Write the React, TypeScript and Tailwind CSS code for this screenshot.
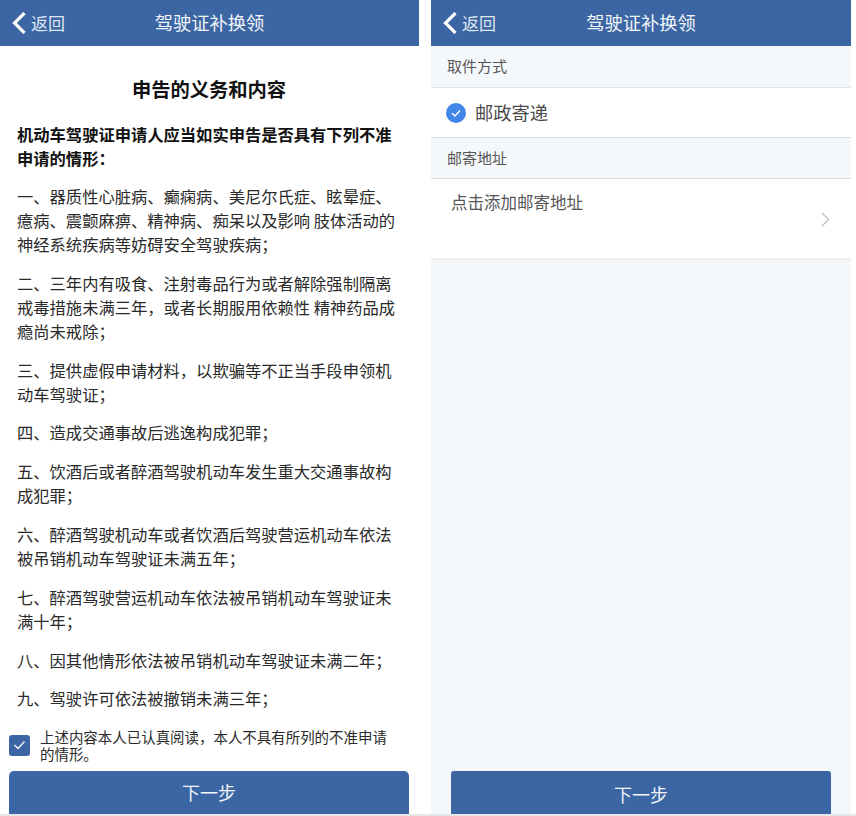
import React from "react";

const paras = [
  "一、器质性心脏病、癫痫病、美尼尔氏症、眩晕症、癔病、震颤麻痹、精神病、痴呆以及影响 肢体活动的神经系统疾病等妨碍安全驾驶疾病；",
  "二、三年内有吸食、注射毒品行为或者解除强制隔离戒毒措施未满三年，或者长期服用依赖性 精神药品成瘾尚未戒除；",
  "三、提供虚假申请材料，以欺骗等不正当手段申领机动车驾驶证；",
  "四、造成交通事故后逃逸构成犯罪；",
  "五、饮酒后或者醉酒驾驶机动车发生重大交通事故构成犯罪；",
  "六、醉酒驾驶机动车或者饮酒后驾驶营运机动车依法被吊销机动车驾驶证未满五年；",
  "七、醉酒驾驶营运机动车依法被吊销机动车驾驶证未满十年；",
  "八、因其他情形依法被吊销机动车驾驶证未满二年；",
  "九、驾驶许可依法被撤销未满三年；",
];

function Header() {
  return (
    <div className="relative flex h-[46px] shrink-0 items-center justify-center bg-[#3b65a3] pb-[1px] text-[18.3px] text-[#f2f5fa]">
      <div className="absolute left-[12px] top-0 flex h-[46px] items-center gap-[5px] pb-[1px] text-[#dfe6f1]">
        <svg width="14" height="22" viewBox="0 0 14 22" fill="none">
          <path d="M12.5 1 L2.5 11 L12.5 21" stroke="#ffffff" strokeWidth="3.2" />
        </svg>
        <span className="text-[17px]">返回</span>
      </div>
      <span>驾驶证补换领</span>
    </div>
  );
}

export default function App() {
  return (
    <div
      className="relative flex h-[816px] w-[856px] overflow-hidden bg-white"
      style={{ fontFamily: '"Noto Sans CJK SC", "Noto Sans", sans-serif' }}
    >
      <div className="flex h-[814px] w-[419px] flex-col bg-white">
        <Header />
        <div className="flex flex-1 flex-col overflow-hidden pl-[17px] pr-[18px] text-[16.3px] leading-[24px] text-[#2a2a2a]">
          <h1 className="mt-[29px] mb-[19px] text-center text-[19.3px] font-bold leading-[28px] text-[#111]">
            申告的义务和内容
          </h1>
          <p className="mb-[14px] font-bold text-[#111]">
            机动车驾驶证申请人应当如实申告是否具有下列不准申请的情形：
          </p>
          {paras.map((p) => (
            <p key={p} className="mb-[14.8px]">
              {p}
            </p>
          ))}
        </div>
        <div className="mb-[9px] flex items-center pl-[9px] pr-[28px]">
          <div className="flex h-[21px] w-[21px] shrink-0 items-center justify-center rounded-[3px] bg-[#3b65a3]">
            <svg width="13" height="10" viewBox="0 0 13 10" fill="none">
              <path d="M1.5 5 L5 8.5 L11.5 1.5" stroke="#fff" strokeWidth="1.3" />
            </svg>
          </div>
          <span className="ml-[10px] text-[14.46px] leading-[17px] text-[#2a2a2a]">
            上述内容本人已认真阅读，本人不具有所列的不准申请的情形。
          </span>
        </div>
        <div className="ml-[9px] mr-[10px] flex h-[43px] shrink-0 items-center justify-center rounded-t-[5px] bg-[#3b65a3] text-[18px] text-[#f2f5fa]">
          下一步
        </div>
      </div>
      <div className="ml-[12px] flex h-[814px] w-[420px] flex-col bg-[#f5f8fa]">
        <Header />
        <div className="flex h-[42px] items-center border-b border-[#e3e4e6] pl-[16px] text-[15px] text-[#555]">
          取件方式
        </div>
        <div className="flex h-[50px] items-center border-b border-[#dcdddf] bg-white pl-[15px]">
          <svg width="20" height="20" viewBox="0 0 20 20" fill="none">
            <circle cx="10" cy="10" r="10" fill="#4285e8" />
            <path d="M6 10.2 L9 13 L14 7.5" stroke="#fff" strokeWidth="1.5" />
          </svg>
          <span className="ml-[9px] text-[18.3px] text-[#4a4a4a]">邮政寄递</span>
        </div>
        <div className="flex h-[41px] items-center border-b border-[#d9dadc] pl-[16px] text-[15px] text-[#555]">
          邮寄地址
        </div>
        <div className="relative h-[81px] border-b-2 border-[#eef0f2] bg-white pl-[20px] pt-[10px] text-[16.5px] leading-[26px] text-[#555]">
          点击添加邮寄地址
          <svg className="absolute right-[21px] top-[33px]" width="9" height="15" viewBox="0 0 9 15" fill="none">
            <path d="M1 1 L7.5 7.5 L1 14" stroke="#c4c6c9" strokeWidth="1.6" />
          </svg>
        </div>
        <div className="flex-1" />
        <div className="mx-[20px] flex h-[43px] shrink-0 items-center justify-center rounded-t-[3px] bg-[#3b65a3] pt-[3px] text-[18px] text-[#f2f5fa]">
          下一步
        </div>
      </div>
      <div className="absolute bottom-0 left-0 h-[2px] w-full bg-[#e6e6e6]" />
    </div>
  );
}
